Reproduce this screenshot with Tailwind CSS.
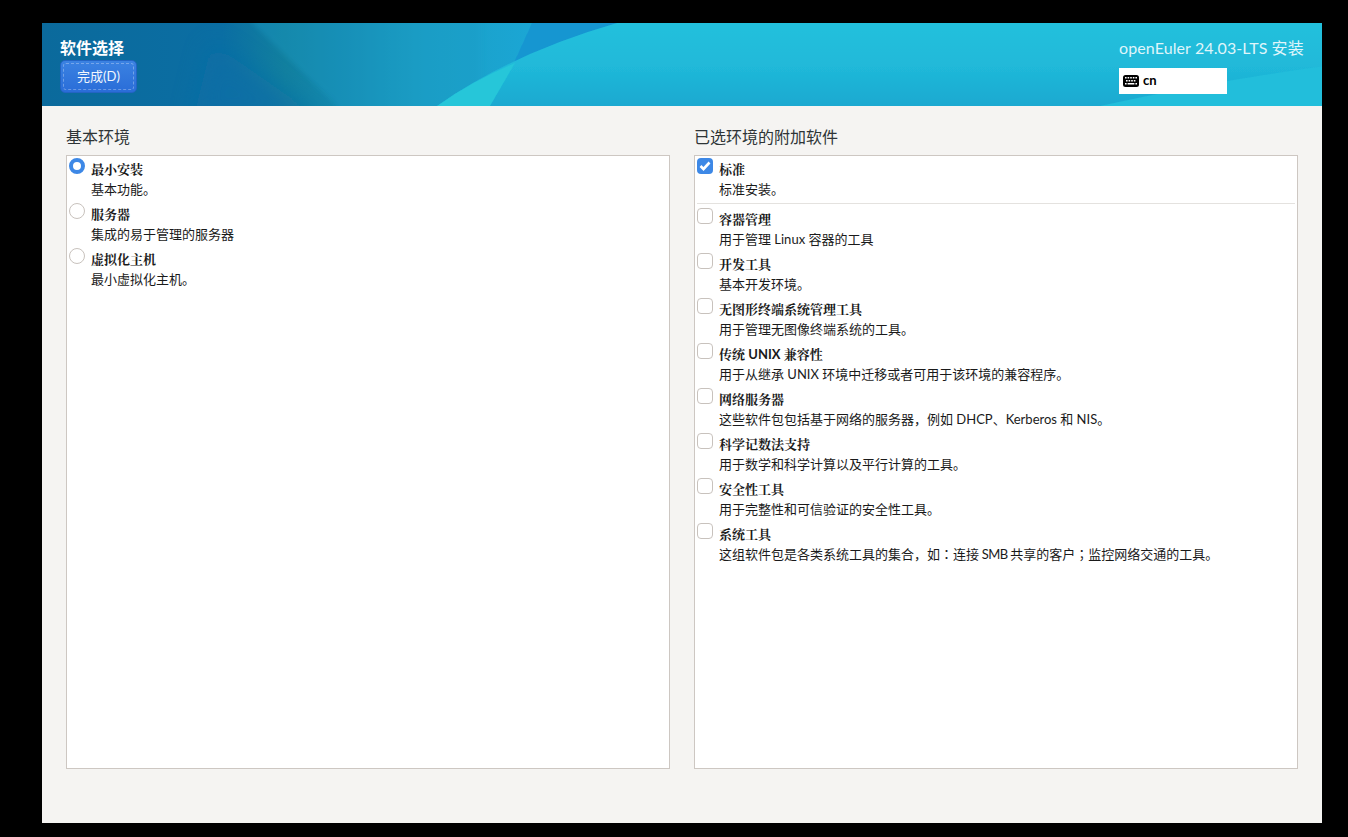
<!DOCTYPE html>
<html>
<head>
  <meta charset="UTF-8" />
  <title>软件选择</title>
  <script src="https://cdn.jsdelivr.net/npm/@tailwindcss/browser@4"></script>
</head>
<body class="bg-black font-['Lato','Noto_Sans_CJK_SC',sans-serif] text-[13px] text-[#1a1a1a]">
  <div class="pt-[23px] pl-[42px] h-[837px] overflow-hidden">
    <div class="w-[1280px] h-[800px] bg-[#f5f4f2] flex flex-col">

      <!-- header -->
      <div class="relative h-[83px] shrink-0 overflow-hidden bg-[#1fbcdb] text-white">
        <svg class="absolute inset-0" width="1280" height="83" viewBox="0 0 1280 83">
          <defs>
            <linearGradient id="base" x1="0" y1="0" x2="1" y2="0">
              <stop offset="0" stop-color="#0b6a9c" />
              <stop offset="0.14" stop-color="#0b6ea3" />
              <stop offset="0.19" stop-color="#12809f" />
              <stop offset="0.23" stop-color="#1488ae" />
              <stop offset="0.3" stop-color="#1a9fc6" />
              <stop offset="0.38" stop-color="#1ba6d4" />
            </linearGradient>
            <linearGradient id="right" x1="0" y1="0" x2="0" y2="1">
              <stop offset="0" stop-color="#22c1dd" />
              <stop offset="0.5" stop-color="#20b9d9" />
              <stop offset="1" stop-color="#1aa6cf" />
            </linearGradient>
            <filter id="soft" filterUnits="userSpaceOnUse" x="-50" y="-50" width="1400" height="200"><feGaussianBlur stdDeviation="0.7" /></filter>
            <filter id="mid" filterUnits="userSpaceOnUse" x="-50" y="-50" width="1400" height="200"><feGaussianBlur stdDeviation="2.5" /></filter>
            <filter id="softer" filterUnits="userSpaceOnUse" x="-50" y="-50" width="1400" height="200"><feGaussianBlur stdDeviation="12" /></filter>
          </defs>
          <rect width="1280" height="83" fill="url(#base)" />
          <!-- dark lower left sweep -->
          <path d="M170 20 L285 100 L150 100 Z" fill="#0b6ea6" opacity="0.8" filter="url(#softer)" />
          <path d="M200 -10 L295 83 L295 100 L440 100 L440 -10 Z" fill="#1a9cc6" opacity="0.35" filter="url(#mid)" />
          <path d="M490 0 L580 0 L470 44 Z" fill="#1796d1" filter="url(#soft)" />
          <path d="M575 -5 L1290 -5 L1290 90 L388 90 L395 83 Q470 30 575 0 Z" fill="url(#right)" filter="url(#soft)" />
          <path d="M395 83 Q430 58 473 40 L448 83 Z" fill="#25c6d9" filter="url(#soft)" />
          <path d="M1058 83 Q1170 58 1290 42 L1290 90 L1058 90 Z" fill="#22bedb" filter="url(#soft)" />
        </svg>
        <div class="relative h-full flex justify-between pl-[18px] pr-[18px]">
          <div class="pt-[14px]">
            <div class="text-[16px] leading-[22px] font-bold">软件选择</div>
            <button class="mt-px w-[77px] h-[33px] rounded-[5px] border border-[#2364c4] bg-gradient-to-b from-[#3b82e2] to-[#2a6dd8] p-[2px] block">
              <span class="flex items-center justify-center h-full rounded-[3px] border border-dashed border-white/30 text-[13px] text-[#f2f7fd]">完成(D)</span>
            </button>
          </div>
          <div class="pt-[14px] w-[185px]">
            <div class="text-[16px] leading-[22px] tracking-[0.1px] text-[#dff5fa] whitespace-nowrap">openEuler 24.03-LTS 安装</div>
            <div class="mt-[9px] w-[108px] h-[26px] bg-white flex items-center pl-[4px] gap-[4px] text-black font-bold text-[13px]">
              <svg width="16" height="12" viewBox="0 0 16 12">
                <rect width="16" height="12" rx="2.5" fill="#000" />
                <g fill="#fff">
                  <rect x="2" y="2" width="1.6" height="1.5" /><rect x="4.6" y="2" width="1.6" height="1.5" /><rect x="7.2" y="2" width="1.6" height="1.5" /><rect x="9.8" y="2" width="1.6" height="1.5" /><rect x="12.4" y="2" width="1.6" height="1.5" />
                  <rect x="3" y="5" width="1.6" height="1.5" /><rect x="5.6" y="5" width="1.6" height="1.5" /><rect x="8.2" y="5" width="1.6" height="1.5" /><rect x="10.8" y="5" width="1.6" height="1.5" />
                  <rect x="2" y="8" width="1.6" height="1.5" /><rect x="4.6" y="8" width="6.8" height="1.5" /><rect x="12.4" y="8" width="1.6" height="1.5" />
                </g>
              </svg>
              <span>cn</span>
            </div>
          </div>
        </div>
      </div>

      <!-- content -->
      <div class="flex gap-[24px] px-[24px] pt-[20px]">
        <div class="w-[604px]">
          <div class="text-[16px] leading-[22px] text-[#2e3436] mb-[7px]">基本环境</div>
          <div class="h-[614px] bg-white border border-[#cdc7c2] pl-[2px] pt-[2px]">
            <div class="flex h-[45px]">
              <span class="w-[16px] h-[16px] rounded-full border-[4px] border-[#3d88e6] bg-white"></span>
              <div class="ml-[6px] leading-[20px] pt-px"><div class="font-bold font-['Noto_Serif_CJK_SC','Noto_Sans_CJK_SC',serif]">最小安装</div><div>基本功能。</div></div>
            </div>
            <div class="flex h-[45px]">
              <span class="w-[16px] h-[16px] rounded-full border border-[#c8c2bd] bg-white"></span>
              <div class="ml-[6px] leading-[20px] pt-px"><div class="font-bold font-['Noto_Serif_CJK_SC','Noto_Sans_CJK_SC',serif]">服务器</div><div>集成的易于管理的服务器</div></div>
            </div>
            <div class="flex h-[45px]">
              <span class="w-[16px] h-[16px] rounded-full border border-[#c8c2bd] bg-white"></span>
              <div class="ml-[6px] leading-[20px] pt-px"><div class="font-bold font-['Noto_Serif_CJK_SC','Noto_Sans_CJK_SC',serif]">虚拟化主机</div><div>最小虚拟化主机。</div></div>
            </div>
          </div>
        </div>

        <div class="w-[604px]">
          <div class="text-[16px] leading-[22px] text-[#2e3436] mb-[7px]">已选环境的附加软件</div>
          <div class="h-[614px] bg-white border border-[#cdc7c2] pl-[2px] pt-[2px]">
            <div class="flex h-[45px]">
              <span class="w-[16px] h-[16px] rounded-[4px] bg-[#3d88e6] flex items-center justify-center">
                <svg width="12" height="10" viewBox="0 0 12 10"><path d="M1.5 5 L4.5 8 L10.5 1.5" fill="none" stroke="#fff" stroke-width="2.6" /></svg>
              </span>
              <div class="ml-[6px] leading-[20px] pt-px"><div class="font-bold font-['Noto_Serif_CJK_SC','Noto_Sans_CJK_SC',serif]">标准</div><div>标准安装。</div></div>
            </div>
            <div class="h-px bg-[#e4e2df] mr-[2px] mb-[4px]"></div>
            <div class="flex h-[45px]">
              <span class="w-[16px] h-[16px] rounded-[4px] border border-[#c8c2bd] bg-white"></span>
              <div class="ml-[6px] leading-[20px] pt-px"><div class="font-bold font-['Noto_Serif_CJK_SC','Noto_Sans_CJK_SC',serif]">容器管理</div><div>用于管理 Linux 容器的工具</div></div>
            </div>
            <div class="flex h-[45px]">
              <span class="w-[16px] h-[16px] rounded-[4px] border border-[#c8c2bd] bg-white"></span>
              <div class="ml-[6px] leading-[20px] pt-px"><div class="font-bold font-['Noto_Serif_CJK_SC','Noto_Sans_CJK_SC',serif]">开发工具</div><div>基本开发环境。</div></div>
            </div>
            <div class="flex h-[45px]">
              <span class="w-[16px] h-[16px] rounded-[4px] border border-[#c8c2bd] bg-white"></span>
              <div class="ml-[6px] leading-[20px] pt-px"><div class="font-bold font-['Noto_Serif_CJK_SC','Noto_Sans_CJK_SC',serif]">无图形终端系统管理工具</div><div>用于管理无图像终端系统的工具。</div></div>
            </div>
            <div class="flex h-[45px]">
              <span class="w-[16px] h-[16px] rounded-[4px] border border-[#c8c2bd] bg-white"></span>
              <div class="ml-[6px] leading-[20px] pt-px"><div class="font-bold font-['Noto_Serif_CJK_SC','Noto_Sans_CJK_SC',serif]">传统 <span class="font-['Lato']">UNIX</span> 兼容性</div><div>用于从继承 UNIX 环境中迁移或者可用于该环境的兼容程序。</div></div>
            </div>
            <div class="flex h-[45px]">
              <span class="w-[16px] h-[16px] rounded-[4px] border border-[#c8c2bd] bg-white"></span>
              <div class="ml-[6px] leading-[20px] pt-px"><div class="font-bold font-['Noto_Serif_CJK_SC','Noto_Sans_CJK_SC',serif]">网络服务器</div><div>这些软件包包括基于网络的服务器，例如 DHCP、Kerberos 和 NIS。</div></div>
            </div>
            <div class="flex h-[45px]">
              <span class="w-[16px] h-[16px] rounded-[4px] border border-[#c8c2bd] bg-white"></span>
              <div class="ml-[6px] leading-[20px] pt-px"><div class="font-bold font-['Noto_Serif_CJK_SC','Noto_Sans_CJK_SC',serif]">科学记数法支持</div><div>用于数学和科学计算以及平行计算的工具。</div></div>
            </div>
            <div class="flex h-[45px]">
              <span class="w-[16px] h-[16px] rounded-[4px] border border-[#c8c2bd] bg-white"></span>
              <div class="ml-[6px] leading-[20px] pt-px"><div class="font-bold font-['Noto_Serif_CJK_SC','Noto_Sans_CJK_SC',serif]">安全性工具</div><div>用于完整性和可信验证的安全性工具。</div></div>
            </div>
            <div class="flex h-[45px]">
              <span class="w-[16px] h-[16px] rounded-[4px] border border-[#c8c2bd] bg-white"></span>
              <div class="ml-[6px] leading-[20px] pt-px"><div class="font-bold font-['Noto_Serif_CJK_SC','Noto_Sans_CJK_SC',serif]">系统工具</div><div>这组软件包是各类系统工具的集合，如<span class="font-['Noto_Sans_CJK_TC']">：</span>连接<span class="tracking-[-0.6px]"> SMB </span>共享的客户<span class="font-['Noto_Sans_CJK_TC']">；</span>监控网络交通的工具。</div></div>
            </div>
          </div>
        </div>
      </div>

    </div>
  </div>
</body>
</html>
